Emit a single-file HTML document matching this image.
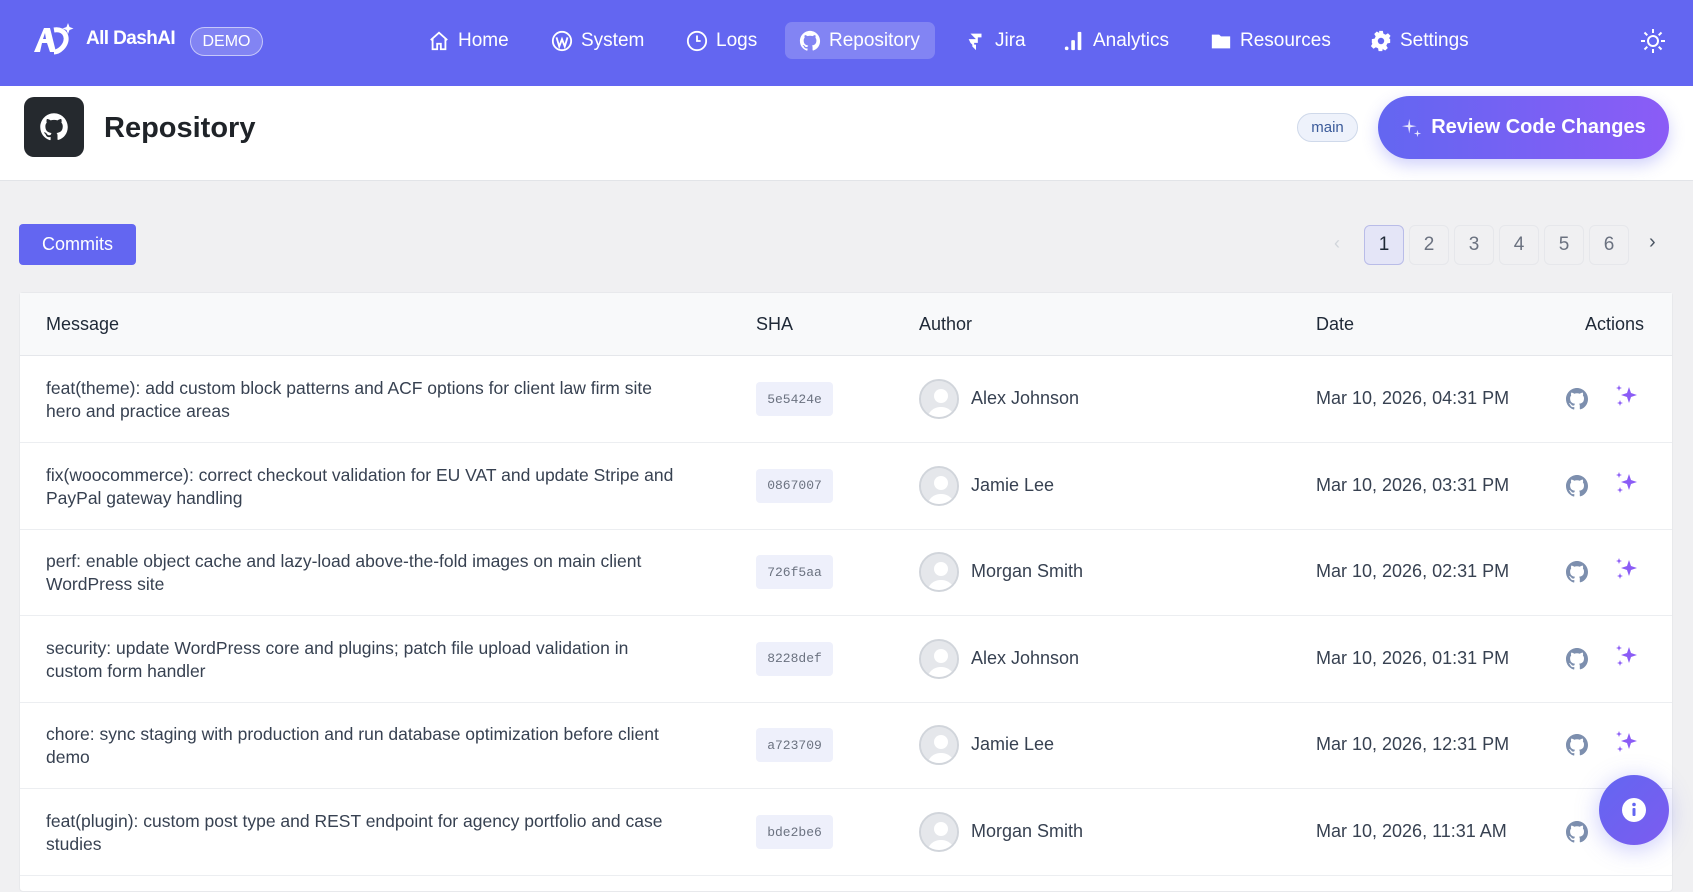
<!DOCTYPE html>
<html><head><meta charset="utf-8">
<style>
*{box-sizing:border-box;margin:0;padding:0}
body{width:1693px;height:871px;overflow:hidden;background:#f0f0f2;font-family:"Liberation Sans",sans-serif;color:#374151;position:relative}
.nav{position:absolute;left:0;top:0;width:1693px;height:86px;background:#6366f1;color:#fff}
.nav .it{position:absolute;top:22px;height:37px;display:flex;align-items:center;font-size:19px;gap:8px;padding:0 14px;border-radius:7px}
.nav .it svg{width:22px;height:22px}
.hdr{position:absolute;left:0;top:86px;width:1693px;height:95px;background:#fff;border-bottom:1px solid #e2e4e8}
.pg{position:absolute;top:225px;width:40px;height:40px;border:1px solid #e6e7eb;border-radius:6px;display:flex;align-items:center;justify-content:center;font-size:19px;color:#6b7280}
.tbl{position:absolute;left:19px;top:292px;width:1654px;height:600px;background:#fff;border:1px solid #e8e9ec;border-radius:4px}
.th{position:absolute;left:0;top:0;width:100%;height:63px;background:#f8f9fa;border-bottom:1px solid #e5e7eb;font-size:18px;color:#1f2937}
.th span{position:absolute;top:21px}
.row{position:absolute;left:0;width:100%;height:87px;border-bottom:1px solid #eceef1;font-size:18px}
.msg{position:absolute;left:26px;top:21px;width:640px;line-height:23px;color:#374151;font-size:17.5px}
.sha{position:absolute;left:736px;top:26px;width:77px;height:34px;background:#eef0fb;border-radius:4px;font-family:"Liberation Mono",monospace;font-size:13px;color:#6b7280;display:flex;align-items:center;justify-content:center}
.av{position:absolute;left:899px;top:23px;width:40px;height:40px;border-radius:50%;background:#e5e7eb;border:2px solid #d1d5db;overflow:hidden}
.nm{position:absolute;left:951px;top:32px}
.dt{position:absolute;left:1296px;top:32px}
.gh{position:absolute;left:1545px;top:31px}
.sp{position:absolute;left:1594px;top:27px}
</style></head><body>
<div class="nav">
 <svg style="position:absolute;left:32px;top:22px" width="42" height="34" viewBox="0 0 42 34"><path d="M2 30 L12 6 L18 6 L24 30 L18 30 L15 21 L10 21 L8 30Z M11 17 L14 17 L13 11Z" fill="#fff"/><path d="M22 8 C34 6 38 18 30 26 C27 29 24 30 22 30" stroke="#fff" stroke-width="5" fill="none"/><path d="M36 1 l1.5 4 4 1.5 -4 1.5 -1.5 4 -1.5 -4 -4 -1.5 4 -1.5z" fill="#fff"/></svg>
 <div style="position:absolute;left:86px;top:28px;font-size:19px;font-weight:bold;letter-spacing:-0.6px">All DashAI</div>
 <div style="position:absolute;left:190px;top:27px;width:73px;height:29px;border:1px solid rgba(255,255,255,.55);background:rgba(255,255,255,.2);border-radius:15px;font-size:16px;display:flex;align-items:center;justify-content:center">DEMO</div>
 <div class="it" style="left:414px"><svg viewBox="0 0 24 24" fill="none" stroke="#fff" stroke-width="2"><path d="M3 11 L12 3 L21 11 M5 9 V21 H10 V15 H14 V21 H19 V9"/></svg>Home</div>
 <div class="it" style="left:537px"><svg viewBox="0 0 24 24" fill="none" stroke="#fff" stroke-width="2"><circle cx="12" cy="12" r="10"/><path d="M6 8 L9 18 L12 10 L15 18 L18 8"/></svg>System</div>
 <div class="it" style="left:672px"><svg viewBox="0 0 24 24" fill="none" stroke="#fff" stroke-width="2"><circle cx="12" cy="12" r="10"/><path d="M12 6 V12 H16"/></svg>Logs</div>
 <div class="it" style="left:785px;width:150px;background:rgba(255,255,255,.2)"><svg viewBox="0 0 24 24" fill="#fff"><path d="M12 1C6 1 1 6 1 12c0 5 3 9 7.5 10.5.6.1.8-.2.8-.5v-2c-3 .7-3.7-1.4-3.7-1.4-.5-1.3-1.2-1.6-1.2-1.6-1-.7.1-.7.1-.7 1.1.1 1.7 1.1 1.7 1.1 1 1.7 2.6 1.2 3.2.9.1-.7.4-1.2.7-1.5-2.4-.3-5-1.2-5-5.4 0-1.2.4-2.2 1.1-2.9-.1-.3-.5-1.4.1-2.9 0 0 .9-.3 3 1.1a10 10 0 015.5 0c2.1-1.4 3-1.1 3-1.1.6 1.5.2 2.6.1 2.9.7.8 1.1 1.7 1.1 2.9 0 4.2-2.6 5.1-5 5.4.4.3.8 1 .8 2v3c0 .3.2.6.8.5C20 21 23 17 23 12 23 6 18 1 12 1z"/></svg>Repository</div>
 <div class="it" style="left:951px"><svg viewBox="0 0 24 24" fill="#fff"><path d="M6 4h12v4l-4 0 0 4-4-4z M4 10h10v4l-4 0 0 4-4-4z M8 16h4v6l-4-4z"/></svg>Jira</div>
 <div class="it" style="left:1049px"><svg viewBox="0 0 24 24" fill="#fff"><rect x="2" y="18" width="4" height="4" rx="2"/><rect x="9" y="11" width="4" height="11" rx="1"/><rect x="16" y="2" width="4" height="20" rx="1"/></svg>Analytics</div>
 <div class="it" style="left:1196px"><svg viewBox="0 0 24 24" fill="#fff"><path d="M2 5h8l2 2h10v13H2z"/></svg>Resources</div>
 <div class="it" style="left:1356px"><svg viewBox="0 0 24 24" fill="#fff"><path d="M10 1h4l.6 3 2.4 1.2 2.6-1.6 2.8 2.8-1.6 2.6L22 10v4l-3 .6-1.2 2.4 1.6 2.6-2.8 2.8-2.6-1.6L14 20l-.6 3h-4l-.6-3-2.4-1.2-2.6 1.6-2.8-2.8 1.6-2.6L2 14v-4l3-.6 1.2-2.4-1.6-2.6 2.8-2.8 2.6 1.6L10 4z"/><circle cx="12" cy="12" r="3.5" fill="#6366f1"/></svg>Settings</div>
 <svg style="position:absolute;left:1640px;top:28px" width="26" height="26" viewBox="0 0 26 26" fill="none" stroke="#fff" stroke-width="2"><circle cx="13" cy="13" r="5"/><path d="M13 1v4M13 21v4M1 13h4M21 13h4M4.5 4.5l2.8 2.8M18.7 18.7l2.8 2.8M4.5 21.5l2.8-2.8M18.7 7.3l2.8-2.8"/></svg>
</div>
<div class="hdr">
 <div style="position:absolute;left:24px;top:11px;width:60px;height:60px;background:#25292e;border-radius:10px;display:flex;align-items:center;justify-content:center"><svg width="30" height="30" viewBox="0 0 24 24" fill="#fff"><path d="M12 1C6 1 1 6 1 12c0 5 3 9 7.5 10.5.6.1.8-.2.8-.5v-2c-3 .7-3.7-1.4-3.7-1.4-.5-1.3-1.2-1.6-1.2-1.6-1-.7.1-.7.1-.7 1.1.1 1.7 1.1 1.7 1.1 1 1.7 2.6 1.2 3.2.9.1-.7.4-1.2.7-1.5-2.4-.3-5-1.2-5-5.4 0-1.2.4-2.2 1.1-2.9-.1-.3-.5-1.4.1-2.9 0 0 .9-.3 3 1.1a10 10 0 015.5 0c2.1-1.4 3-1.1 3-1.1.6 1.5.2 2.6.1 2.9.7.8 1.1 1.7 1.1 2.9 0 4.2-2.6 5.1-5 5.4.4.3.8 1 .8 2v3c0 .3.2.6.8.5C20 21 23 17 23 12 23 6 18 1 12 1z"/></svg></div>
 <div style="position:absolute;left:104px;top:26px;font-size:29px;font-weight:bold;color:#1f2328">Repository</div>
 <div style="position:absolute;left:1297px;top:27px;width:61px;height:29px;background:#eef2fb;border:1px solid #cfd9ea;border-radius:15px;font-size:15px;color:#3b5b9a;display:flex;align-items:center;justify-content:center">main</div>
 <div style="position:absolute;left:1378px;top:10px;width:291px;height:63px;border-radius:32px;background:linear-gradient(90deg,#6366f1,#8b5cf6);box-shadow:0 6px 16px rgba(99,102,241,.3);color:#fff;font-size:20px;font-weight:bold;display:flex;align-items:center;justify-content:center;gap:8px"><svg width="22" height="22" viewBox="0 0 24 24" fill="#fff" opacity=".85"><path d="M9 2l1.2 6.8L17 10l-6.8 1.2L9 18l-1.2-6.8L1 10l6.8-1.2z"/><path d="M18 14l.8 3.2 3.2.8-3.2.8L18 22l-.8-3.2L14 18l3.2-.8z"/></svg>Review Code Changes</div>
</div>
<div style="position:absolute;left:19px;top:224px;width:117px;height:41px;background:#6366f1;border-radius:4px;color:#fff;font-size:18px;display:flex;align-items:center;justify-content:center">Commits</div>
<div style="position:absolute;left:1334px;top:233px;color:#d1d5db;font-size:18px">‹</div>
<div class="pg" style="left:1364px;background:#e4e5f7;border-color:#b9bce8;color:#1f2937">1</div>
<div class="pg" style="left:1409px">2</div><div class="pg" style="left:1454px">3</div><div class="pg" style="left:1499px">4</div><div class="pg" style="left:1544px">5</div><div class="pg" style="left:1589px">6</div>
<div style="position:absolute;left:1649px;top:231px;color:#4b5563;font-size:20px">›</div>
<div class="tbl">
 <div class="th"><span style="left:26px">Message</span><span style="left:736px">SHA</span><span style="left:899px">Author</span><span style="left:1296px">Date</span><span style="left:1565px">Actions</span></div>
 <div id="rows"></div>
</div>
<div style="position:absolute;left:1599px;top:775px;width:70px;height:70px;border-radius:50%;background:linear-gradient(135deg,#6366f1,#7c5cf0);box-shadow:0 4px 24px rgba(99,102,241,.35);display:flex;align-items:center;justify-content:center"><svg width="26" height="26" viewBox="0 0 26 26"><circle cx="13" cy="13" r="12" fill="#fff"/><rect x="11.5" y="11" width="3" height="8" rx="1" fill="#6366f1"/><circle cx="13" cy="7.5" r="1.8" fill="#6366f1"/></svg></div>
<script>
var d=[["feat(theme): add custom block patterns and ACF options for client law firm site hero and practice areas","5e5424e","Alex Johnson","04:31 PM"],
["fix(woocommerce): correct checkout validation for EU VAT and update Stripe and PayPal gateway handling","0867007","Jamie Lee","03:31 PM"],
["perf: enable object cache and lazy-load above-the-fold images on main client WordPress site","726f5aa","Morgan Smith","02:31 PM"],
["security: update WordPress core and plugins; patch file upload validation in custom form handler","8228def","Alex Johnson","01:31 PM"],
["chore: sync staging with production and run database optimization before client demo","a723709","Jamie Lee","12:31 PM"],
["feat(plugin): custom post type and REST endpoint for agency portfolio and case studies","bde2be6","Morgan Smith","11:31 AM"]];
var gh='<svg width="24" height="24" viewBox="0 0 24 24" fill="#7d8fae"><path d="M12 1C6 1 1 6 1 12c0 5 3 9 7.5 10.5.6.1.8-.2.8-.5v-2c-3 .7-3.7-1.4-3.7-1.4-.5-1.3-1.2-1.6-1.2-1.6-1-.7.1-.7.1-.7 1.1.1 1.7 1.1 1.7 1.1 1 1.7 2.6 1.2 3.2.9.1-.7.4-1.2.7-1.5-2.4-.3-5-1.2-5-5.4 0-1.2.4-2.2 1.1-2.9-.1-.3-.5-1.4.1-2.9 0 0 .9-.3 3 1.1a10 10 0 015.5 0c2.1-1.4 3-1.1 3-1.1.6 1.5.2 2.6.1 2.9.7.8 1.1 1.7 1.1 2.9 0 4.2-2.6 5.1-5 5.4.4.3.8 1 .8 2v3c0 .3.2.6.8.5C20 21 23 17 23 12 23 6 18 1 12 1z"/></svg>';
var sp='<svg width="26" height="26" viewBox="0 0 26 26" fill="#8b5cf6"><path d="M15 4l2 6 6 2-6 2-2 6-2-6-6-2 6-2z"/><path d="M5 2l.8 2.2L8 5l-2.2.8L5 8l-.8-2.2L2 5l2.2-.8z"/><path d="M6 17l.8 2.2L9 20l-2.2.8L6 23l-.8-2.2L3 20l2.2-.8z"/></svg>';
var av='<svg width="40" height="40" viewBox="0 0 40 40"><rect width="40" height="40" fill="#e5e7eb"/><circle cx="20" cy="15" r="7" fill="#fff"/><path d="M6 38c2-9 8-12 14-12s12 3 14 12z" fill="#fff"/></svg>';
var h='';d.forEach(function(r,i){h+='<div class="row" style="top:'+(63+i*86.6)+'px"><div class="msg">'+r[0]+'</div><div class="sha">'+r[1]+'</div><div class="av">'+av+'</div><div class="nm">'+r[2]+'</div><div class="dt">Mar 10, 2026, '+r[3]+'</div><div class="gh">'+gh+'</div>'+(i<5?'<div class="sp">'+sp+'</div>':'')+'</div>'});
document.getElementById('rows').innerHTML=h;
</script>
</body></html>
